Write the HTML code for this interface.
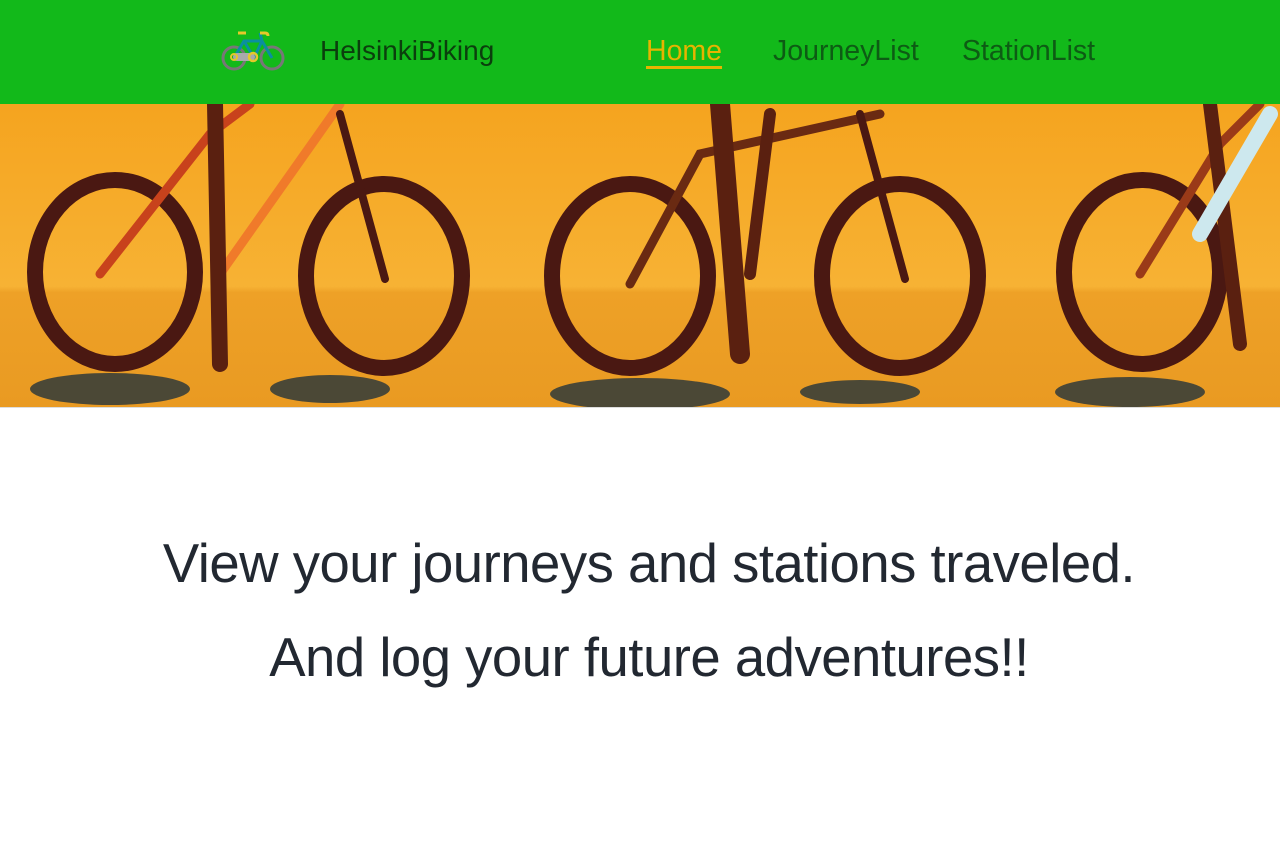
<!DOCTYPE html>
<html><head><meta charset="utf-8"><style>
*{margin:0;padding:0;box-sizing:border-box}
body{width:1280px;height:853px;background:#fff;font-family:"Liberation Sans",sans-serif;overflow:hidden;position:relative}
.nav{position:absolute;left:0;top:0;width:1280px;height:104px;background:#12b91a}
.brand{position:absolute;left:320px;top:35px;font-size:28px;color:#0b3f0d}
.nl{position:absolute;top:35px;font-size:28.5px;color:#0d5c14}
.home{left:646px;color:#e6b400;text-decoration:underline;text-underline-offset:6px;text-decoration-thickness:3px}
.banner{position:absolute;left:0;top:104px}
.t{position:absolute;left:9px;width:1280px;text-align:center;font-size:54.5px;color:#222831;letter-spacing:-0.5px}
</style></head><body>
<div class="nav">
<svg style="position:absolute;left:220px;top:28px" width="66" height="48" viewBox="0 0 66 48">
<circle cx="14" cy="30" r="11" fill="none" stroke="#777" stroke-width="3"/>
<circle cx="52" cy="30" r="11" fill="none" stroke="#777" stroke-width="3"/>
<path d="M14 30 L24 13 L42 13 L52 30 M24 13 L34 30 L42 13 M42 13 L40 5" fill="none" stroke="#0a8fa0" stroke-width="3"/>
<path d="M18 5 h8 M40 5 h5 q3 0 3 3" fill="none" stroke="#e5c82a" stroke-width="3"/>
<rect x="13" y="25" width="22" height="8" rx="4" fill="#aaa"/>
<circle cx="33" cy="29" r="4" fill="none" stroke="#e5c82a" stroke-width="2.5"/>
<circle cx="14" cy="29" r="3" fill="none" stroke="#e5c82a" stroke-width="2"/>
</svg>
<div class="brand">HelsinkiBiking</div>
<div class="nl home">Home</div>
<div class="nl" style="left:773px">JourneyList</div>
<div class="nl" style="left:962px">StationList</div>
</div>
<svg class="banner" width="1280" height="304" viewBox="0 0 1280 304">
<defs><linearGradient id="g" x1="0" y1="0" x2="0" y2="1">
<stop offset="0" stop-color="#f5a41f"/><stop offset="0.6" stop-color="#f7b234"/><stop offset="0.62" stop-color="#eea127"/><stop offset="1" stop-color="#e99a22"/></linearGradient></defs>
<rect width="1280" height="304" fill="url(#g)"/>
<g fill="#2f3a3a" opacity="0.85">
<ellipse cx="110" cy="285" rx="80" ry="16"/><ellipse cx="330" cy="285" rx="60" ry="14"/>
<ellipse cx="640" cy="290" rx="90" ry="16"/><ellipse cx="860" cy="288" rx="60" ry="12"/>
<ellipse cx="1130" cy="288" rx="75" ry="15"/></g>
<g fill="none" stroke="#4a1812" stroke-width="16">
<ellipse cx="115" cy="168" rx="80" ry="92"/><ellipse cx="384" cy="172" rx="78" ry="92"/>
<ellipse cx="630" cy="172" rx="78" ry="92"/><ellipse cx="900" cy="172" rx="78" ry="92"/>
<ellipse cx="1142" cy="168" rx="78" ry="92"/></g>
<g fill="none" stroke-width="9" stroke-linecap="round">
<path d="M100 170 L210 30 L250 0" stroke="#c8421c"/>
<path d="M220 170 L340 0" stroke="#f07a2a"/>
<path d="M340 10 L385 175" stroke="#4a1812" stroke-width="8"/>
<path d="M215 0 L220 260" stroke="#5a2010" stroke-width="16"/>
<path d="M630 180 L700 50 L880 10" stroke="#6a2a12"/>
<path d="M860 10 L905 175" stroke="#4a1812" stroke-width="8"/>
<path d="M720 0 L740 250" stroke="#5a2010" stroke-width="20"/>
<path d="M770 10 L750 170" stroke="#5a2010" stroke-width="12"/>
<path d="M1140 170 L1220 40 L1260 0" stroke="#9a3a18"/>
<path d="M1210 0 L1240 240" stroke="#5a2010" stroke-width="14"/>
<path d="M1200 130 L1270 10" stroke="#cde8ee" stroke-width="16"/>
</g>
<rect x="0" y="303" width="1280" height="1" fill="#ddd"/>
</svg>
<div class="t" style="top:532px">View your journeys and stations traveled.</div>
<div class="t" style="top:626px">And log your future adventures!!</div>
</body></html>
